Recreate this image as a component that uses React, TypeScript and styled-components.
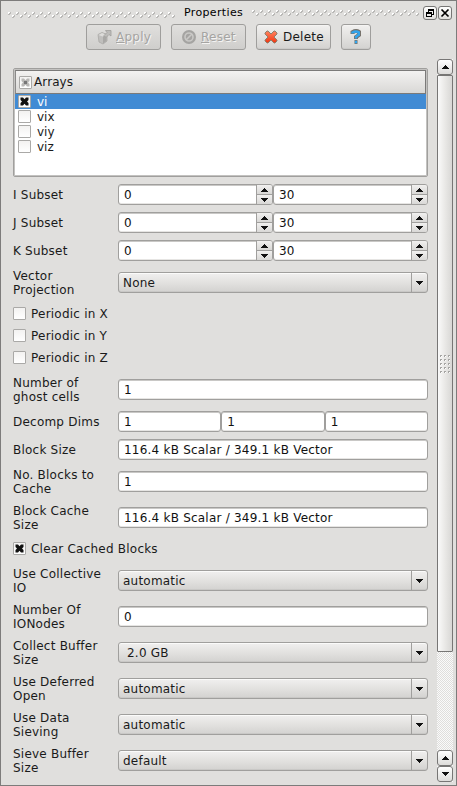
import React from "react";
import styled, { createGlobalStyle, css } from "styled-components";

const GlobalStyle = createGlobalStyle`
  * { box-sizing: border-box; }
  body { margin: 0; background: #e0dfdd; overflow: hidden; }
`;

const raised = css`background: linear-gradient(#f1f0ef, #e4e3e1 45%, #d3d2d0);`;

const Dock = styled.div`
  width: 457px; height: 786px; border: 1px solid #7d7c7b;
  background: #e0dfdd; color: #1a1a1a;
  font: 12px/14px "DejaVu Sans", sans-serif; letter-spacing: 0.22px;
  display: flex; flex-direction: column;
`;
const TitleBar = styled.header`
  height: 23px; padding: 5px 4px 0 7px; display: flex; align-items: flex-start;
`;
const Title = styled.span`
  font-size: 11px; letter-spacing: 0.35px; line-height: 14px; width: 59px; color: #000;
  margin: 0 9px 0 8px; white-space: nowrap;
`;
const Grip = styled.svg<{ $top: number }>`
  display: block; margin-top: ${p => p.$top}px; flex: none;
`;
const WindowButton = styled.button`
  width: 14px; height: 14px; padding: 0; border: 1px solid #777675; border-radius: 3px;
  background: linear-gradient(#fff, #e0dfdd); margin-left: 1px; display: flex;
  align-items: center; justify-content: center; flex: none;
`;
const Toolbar = styled.div`
  display: flex; gap: 10px; padding-left: 85px; height: 26px;
`;
const ToolButton = styled.button<{ $w: number; $pad?: number; $gap?: number }>`
  ${raised}
  width: ${p => p.$w}px; height: 26px; padding: 0 0 0 ${p => p.$pad ?? 9}px;
  border: 1px solid #9f9e9c; border-radius: 3px; box-shadow: inset 0 1px #f5f4f3, inset 0 -1px #cbcac8;
  display: flex; align-items: center; gap: ${p => p.$gap ?? 4}px;
  font: inherit; letter-spacing: 0.25px; color: #1a1a1a;
  &:disabled { color: #a5a4a2; text-shadow: 1px 1px #f5f4f3; background: linear-gradient(#e0dfdd, #cfcecc); box-shadow: none; }
  svg { flex: none; }
`;
const Content = styled.div`
  flex: 1; min-height: 0; display: flex; padding: 9px 3px 3px 12px; justify-content: space-between;
`;
const Form = styled.div`
  width: 415px; display: flex; flex-direction: column; gap: 7px; padding-top: 9px;
`;
const ListBox = styled.div`
  height: 109px; flex: none; border: 1px solid #a09f9d; border-radius: 2px;
  box-shadow: inset 0 0 0 1px #c3c2c0; background: #fff; padding: 1px;
`;
const ListHeader = styled.div`
  height: 24px; padding-left: 3px; border: 1px solid #7b7a79; border-left-color: #8b8a89;
  background: linear-gradient(#f3f2f1, #d9d8d6);
  display: flex; align-items: center; gap: 2px; letter-spacing: 0.1px;
`;
const ListRow = styled.div<{ $selected?: boolean }>`
  height: 15px; padding-left: 3px; display: flex; align-items: center; gap: 6px; letter-spacing: 0;
  background: ${p => (p.$selected ? "#418bd4" : "transparent")};
  color: ${p => (p.$selected ? "#fff" : "#1a1a1a")};
`;
const Box = styled.span`
  width: 13px; height: 13px; flex: none; border: 1px solid #aaa9a7; border-radius: 1px;
  background: linear-gradient(#f3f2f1, #fff); display: flex; align-items: center; justify-content: center;
`;
const CheckStack = styled.div`
  display: flex; flex-direction: column; gap: 7px; padding: 2px 0 3px;
`;
const CheckRow = styled.label`
  height: 15px; display: flex; align-items: center; gap: 5px;
`;
const Row = styled.div<{ $tall?: boolean }>`
  height: ${p => (p.$tall ? 29 : 21)}px; flex: none; display: grid;
  grid-template-columns: 105px 310px; align-items: center;
`;
const Label = styled.span`white-space: pre-line;`;
const Fields = styled.div<{ $count: number }>`
  display: grid; grid-template-columns: repeat(${p => p.$count}, 1fr);
`;
const frame = css`
  height: 21px; border: 1px solid #a09f9d; border-radius: 3px; display: flex; overflow: hidden;
`;
const Input = styled.div`
  ${frame}
  background: #fff; box-shadow: inset 0 1px #c9c8c6, inset 0 -1px #e6e5e3; color: #111;
`;
const Combo = styled.div`
  ${frame}
  ${raised}
  box-shadow: inset 0 1px #fbfbfa, inset 0 -1px #c9c8c6;
`;
const Value = styled.span<{ $left?: number }>`
  flex: 1; padding-left: ${p => p.$left ?? 5}px; line-height: 20px; white-space: nowrap;
`;
const DropArrow = styled.span`
  width: 16px; border-left: 1px solid #a09f9d; display: flex; align-items: center; justify-content: center;
`;
const Stepper = styled.span`
  width: 16px; border-left: 1px solid #a09f9d; display: grid; grid-template-rows: 9px 10px;
`;
const Step = styled.span`
  display: flex; align-items: center; justify-content: center;
  background: linear-gradient(#f1f0ef, #d9d8d6);
  & + & { border-top: 1px solid #a09f9d; }
`;
const ScrollBar = styled.div`
  width: 16px; display: flex; flex-direction: column;
  background: repeating-conic-gradient(#fafafa 0% 25%, #dfdedc 0% 50%) 0 0 / 2px 2px;
`;
const ScrollButton = styled.button`
  width: 16px; height: 16px; flex: none; padding: 0; border: 1px solid #777675; border-radius: 3px;
  background: linear-gradient(#fff, #dddcda); display: flex; align-items: center; justify-content: center;
`;
const Thumb = styled.div`
  height: 577px; border: 1px solid #777675; border-radius: 1px;
  background: linear-gradient(90deg, #fafafa, #ebeae8 45%, #d8d7d5);
  display: flex; align-items: center; justify-content: center; padding-top: 2px;
`;
const Spacer = styled.div`flex: 1;`;

function Hatch({ width, top, id }: { width: number; top: number; id: string }) {
  return (
    <Grip $top={top} width={width} height="6" shapeRendering="crispEdges">
      <defs>
        <pattern id={id} width="8" height="6" patternUnits="userSpaceOnUse">
          <path d="M0 0h2v1h-1v1h-1zM4 3h2v1h-1v1h-1z" fill="#fff" />
          <path d="M2 0h1v2h-1v1h-2v-1h1v-1h1zM6 3h1v2h-1v1h-2v-1h1v-1h1z" fill="#bab9b7" />
        </pattern>
      </defs>
      <rect width={width} height="6" fill={`url(#${id})`} />
    </Grip>
  );
}

function Arrow({ up }: { up?: boolean }) {
  return (
    <svg width="7" height="4" shapeRendering="crispEdges">
      <path d={up ? "M3 0h1v1h1v1h1v1h1v1h-7v-1h1v-1h1v-1h1z" : "M0 0h7v1h-1v1h-1v1h-1v1h-1v-1h-1v-1h-1v-1h-1z"} fill="#111" />
    </svg>
  );
}

function Check({ state }: { state?: "on" | "partial" }) {
  return (
    <Box>
      {state && (
        <svg width="9" height="9">
          <path d="M0.500 0.500h2.500l1.500 1.700L6 .5h2.500v2.500L7 4.500l1.500 1.500v2.500H6L4.500 6.800 3 8.500H.5V6L2 4.500.5 3z"
            fill={state === "on" ? "#111" : "#b9b8b6"} />
          {state === "partial" && <rect x="3" y="3" width="3" height="3" fill="#777" />}
        </svg>
      )}
    </Box>
  );
}

function Select({ value, left = 4 }: { value: string; left?: number }) {
  return <Combo><Value $left={left}>{value}</Value><DropArrow><Arrow /></DropArrow></Combo>;
}

function Spin({ value }: { value: string }) {
  return (
    <Input>
      <Value>{value}</Value>
      <Stepper><Step><Arrow up /></Step><Step><Arrow /></Step></Stepper>
    </Input>
  );
}

function Field({ label, children, count = 1 }: { label: string; children: React.ReactNode; count?: number }) {
  return (
    <Row $tall={label.includes("\n")}>
      <Label>{label}</Label>
      <Fields $count={count}>{children}</Fields>
    </Row>
  );
}

const Text = ({ value }: { value: string }) => <Input><Value>{value}</Value></Input>;

export default function App() {
  return (
    <>
      <GlobalStyle />
      <Dock>
        <TitleBar>
          <Hatch id="gripLeft" width={168} top={6} />
          <Title>Properties</Title>
          <Hatch id="gripRight" width={168} top={4} />
          <Spacer />
          <WindowButton aria-label="Float">
            <svg width="10" height="10" shapeRendering="crispEdges">
              <path d="M3 1h6v6h-2v-1h1v-3h-4v1h-1zM1 4h6v5h-6zM2 6v2h4v-2z" fill="#000" fillRule="evenodd" />
            </svg>
          </WindowButton>
          <WindowButton aria-label="Close">
            <svg width="10" height="10"><path d="M1.500 1.500l7 7M8.500 1.500l-7 7" stroke="#000" strokeWidth="1.700" /></svg>
          </WindowButton>
        </TitleBar>
        <Toolbar>
          <ToolButton $w={75} $pad={10} disabled>
            <svg width="15" height="16">
              <path d="M1 5.500l4-2 5 2v6.500l-4 3-4-2z" fill="#c0bfbd" stroke="#a9a8a6" strokeWidth=".8" />
              <path d="M1.500 6l4 1.500L10 6 5 4z" fill="#dddcda" />
              <path d="M6 7.500v7l3.500-2.500V6.500z" fill="#a9a8a6" />
              <path d="M8.500 1.500h5.500v5.500l-2-1.500L9 8.500 7 6.500l3-3z" fill="#bdbcba" stroke="#9f9e9c" strokeWidth=".8" />
            </svg>
            <span><u>A</u>pply</span>
          </ToolButton>
          <ToolButton $w={75} disabled>
            <svg width="16" height="16">
              <circle cx="8" cy="8" r="7" fill="#a5a4a2" />
              <circle cx="8" cy="8" r="4" fill="none" stroke="#c9c8c6" strokeWidth="1.600" />
              <path d="M5 11l6-6" stroke="#c9c8c6" strokeWidth="1.600" />
            </svg>
            <span><u>R</u>eset</span>
          </ToolButton>
          <ToolButton $w={75} $pad={7} $gap={5}>
            <svg width="14" height="14">
              <defs><linearGradient id="deleteRed" x2="0" y2="1"><stop stopColor="#ff8460" /><stop offset="1" stopColor="#ef3511" /></linearGradient></defs>
              <path d="M1 3l2-2h1l3 3 3-3h1l2 2v1L10 7l3 3v1l-2 2h-1L7 10l-3 3H3l-2-2v-1l3-3-3-3z" fill="url(#deleteRed)" stroke="#8d8170" strokeWidth="1" />
            </svg>
            <span>Delete</span>
          </ToolButton>
          <ToolButton $w={30} $pad={8} aria-label="Help">
            <svg width="12" height="16">
              <path d="M2.500 5V3.200Q6 1 9 3v3L6 8v2M4.500 13h3" fill="none" stroke="#77736c" strokeWidth="4" />
              <path d="M2.500 4.500V3.500Q6 1.500 8.800 3.300v2.500L6 7.800V9.500M4.900 13h2.200" fill="none" stroke="#32a4ec" strokeWidth="2.400" />
            </svg>
          </ToolButton>
        </Toolbar>
        <Content>
          <Form>
            <ListBox>
              <ListHeader><Check state="partial" />Arrays</ListHeader>
              <ListRow $selected><Check state="on" />vi</ListRow>
              <ListRow><Check />vix</ListRow>
              <ListRow><Check />viy</ListRow>
              <ListRow><Check />viz</ListRow>
            </ListBox>
            {["I", "J", "K"].map(axis => (
              <Field key={axis} label={`${axis} Subset`} count={2}><Spin value="0" /><Spin value="30" /></Field>
            ))}
            <Field label={"Vector\nProjection"}><Select value="None" /></Field>
            <CheckStack>
              {["X", "Y", "Z"].map(axis => <CheckRow key={axis}><Check />Periodic in {axis}</CheckRow>)}
            </CheckStack>
            <Field label={"Number of\nghost cells"}><Text value="1" /></Field>
            <Field label="Decomp Dims" count={3}><Text value="1" /><Text value="1" /><Text value="1" /></Field>
            <Field label="Block Size"><Text value="116.4 kB Scalar / 349.1 kB Vector" /></Field>
            <Field label={"No. Blocks to\nCache"}><Text value="1" /></Field>
            <Field label={"Block Cache\nSize"}><Text value="116.4 kB Scalar / 349.1 kB Vector" /></Field>
            <CheckStack><CheckRow><Check state="on" />Clear Cached Blocks</CheckRow></CheckStack>
            <Field label={"Use Collective\nIO"}><Select value="automatic" /></Field>
            <Field label={"Number Of\nIONodes"}><Text value="0" /></Field>
            <Field label={"Collect Buffer\nSize"}><Select value="2.0 GB" left={8} /></Field>
            <Field label={"Use Deferred\nOpen"}><Select value="automatic" /></Field>
            <Field label={"Use Data\nSieving"}><Select value="automatic" /></Field>
            <Field label={"Sieve Buffer\nSize"}><Select value="default" /></Field>
          </Form>
          <ScrollBar>
            <ScrollButton aria-label="Scroll up"><Arrow up /></ScrollButton>
            <Thumb>
              <svg width="11" height="19" shapeRendering="crispEdges">
                {[0, 4, 8, 12, 16].map(y => [0, 4, 8].map(x => (
                  <g key={`${x}-${y}`}>
                    <path d={`M${x} ${y}h2v1h-1v1h-1z`} fill="#a5a4a2" />
                    <rect x={x + 1} y={y + 1} width="1" height="1" fill="#fff" />
                  </g>
                )))}
              </svg>
            </Thumb>
            <Spacer />
            <ScrollButton aria-label="Scroll back"><Arrow up /></ScrollButton>
            <ScrollButton aria-label="Scroll down"><Arrow /></ScrollButton>
          </ScrollBar>
        </Content>
      </Dock>
    </>
  );
}
